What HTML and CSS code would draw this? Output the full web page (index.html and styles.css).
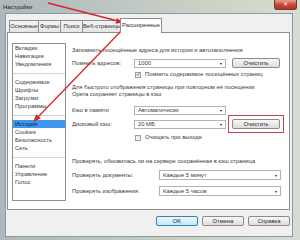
FILE: index.html
```html
<!DOCTYPE html>
<html lang="ru">
<head>
<meta charset="utf-8">
<title>Настройки</title>
<link rel="stylesheet" href="styles.css">
</head>
<body>
<div class="window">
  <div class="titlebar">
    <span class="title">Настройки</span>
    <span class="close">✕</span>
  </div>
  <div class="client">
    <div class="tabs">
      <div class="tab t1">Основные</div>
      <div class="tab t2">Формы</div>
      <div class="tab t3">Поиск</div>
      <div class="tab t4">Веб-страницы</div>
      <div class="tab t5 active">Расширенные</div>
    </div>
    <div class="panel">
      <div class="list">
        <div class="item">Вкладки</div>
        <div class="item">Навигация</div>
        <div class="item">Уведомления</div>
        <div class="sep"></div>
        <div class="item">Содержимое</div>
        <div class="item">Шрифты</div>
        <div class="item">Загрузки</div>
        <div class="item">Программы</div>
        <div class="sep"></div>
        <div class="item selected">История</div>
        <div class="item">Cookies</div>
        <div class="item">Безопасность</div>
        <div class="item">Сеть</div>
        <div class="sep"></div>
        <div class="item">Панели</div>
        <div class="item">Управление</div>
        <div class="item">Голос</div>
      </div>
      <div class="content">
        <div class="text h1">Запомнить посещённые адреса для истории и автозаполнения</div>
        <div class="row r1">
          <span class="label">Помнить адресов:</span>
          <span class="select">1000<i class="arrow"></i></span>
          <span class="btn">Очистить</span>
        </div>
        <div class="check c1"><span class="box checked"><svg viewBox="0 0 6 6" width="6" height="6"><path d="M1 3.2 L2.5 4.6 L5 1.2" fill="none" stroke="#3a3a3a" stroke-width="1"/></svg></span>Помнить содержимое посещённых страниц</div>
        <div class="text h2">Для быстрого отображения страницы при повторном её посещении<br>Opera сохраняет страницы в кэш</div>
        <div class="row r2">
          <span class="label">Кэш в памяти</span>
          <span class="select">Автоматически<i class="arrow"></i></span>
        </div>
        <div class="row r3">
          <span class="label">Дисковый кэш:</span>
          <span class="select">20 МБ<i class="arrow"></i></span>
          <span class="mark"><span class="btn inner">Очистить</span></span>
        </div>
        <div class="check c2"><span class="box"></span>Очищать при выходе</div>
        <div class="text h3">Проверять, обновилась ли на сервере сохранённая в кэш страница</div>
        <div class="row r4">
          <span class="label wide">Проверять документы:</span>
          <span class="select long">Каждые 5 минут<i class="arrow"></i></span>
        </div>
        <div class="row r5">
          <span class="label wide">Проверять изображения:</span>
          <span class="select long">Каждые 5 часов<i class="arrow"></i></span>
        </div>
      </div>
    </div>
    <div class="buttons">
      <span class="btn big default">OK</span>
      <span class="btn big">Отмена</span>
      <span class="btn big">Справка</span>
    </div>
  </div>
  <svg class="arrows" width="300" height="240" viewBox="0 0 300 240">
    <line x1="48" y1="3" x2="118" y2="21" stroke="#d8262a" stroke-width="1.3"/>
    <polygon points="123,22.5 115.5,23.7 116.9,17.9" fill="#d8262a"/>
    <line x1="125" y1="27" x2="37" y2="118" stroke="#d8262a" stroke-width="1.3"/>
    <polygon points="33,122 40.8,118.4 36.4,114.2" fill="#d8262a"/>
  </svg>
</div>
</body>
</html>
```
FILE: styles.css
```css
* { box-sizing: border-box; }
html, body { margin: 0; padding: 0; }
body {
  width: 300px;
  height: 240px;
  overflow: hidden;
  font-family: "Liberation Sans", "DejaVu Sans", Arial, sans-serif;
  font-size: 5.8px;
  color: #3a3a3a;
}
.window {
  position: relative;
  width: 300px;
  height: 240px;
  background: linear-gradient(90deg, #aeb7bb 0%, #bcc5c3 35%, #c9d1c4 65%, #d6ddd2 100%);
  display: flex;
  flex-direction: column;
}
.titlebar {
  height: 13px;
  display: flex;
  align-items: flex-start;
  justify-content: space-between;
  padding-left: 3px;
  padding-right: 3px;
}
.title {
  margin-top: 3px;
  font-size: 6px;
  color: #1c1c1c;
  line-height: 8px;
}
.close {
  width: 23px;
  height: 10px;
  background: linear-gradient(#e8a090, #c8483a 50%, #b8302a);
  border: 1px solid #6e3a38;
  border-top: none;
  border-radius: 0 0 3px 3px;
  color: #fff;
  font-size: 6px;
  line-height: 9px;
  text-align: center;
}
.client {
  margin: 0 7px 0 5px;
  height: 224px;
  background: #f0f0f0;
  border: 1px solid #8f9aa0;
  display: flex;
  flex-direction: column;
}
.tabs {
  display: flex;
  align-items: flex-end;
  height: 14px;
  margin-top: 4px;
  padding-left: 3px;
}
.tab {
  height: 12px;
  line-height: 10px;
  border: 1px solid #8c8e94;
  border-bottom: none;
  margin-right: -1px;
  background: linear-gradient(#f4f4f4, #e4e4e4);
  text-align: center;
  color: #333;
  white-space: nowrap;
}
.t1 { width: 30px; }
.t2 { width: 23px; }
.t3 { width: 23px; }
.t4 { width: 39px; }
.t5 { width: 42px; }
.tab.active {
  height: 15px;
  line-height: 12px;
  background: #fff;
  position: relative;
  z-index: 1;
  margin-bottom: -1px;
}
.panel {
  margin-left: 1px;
  width: 283px;
  height: 178px;
  background: #fff;
  border: 1px solid #8c8e94;
  display: flex;
  padding: 10px 0 0 4px;
}
.list {
  width: 54px;
  height: 158px;
  border: 1px solid #8a8e96;
  display: flex;
  flex-direction: column;
  flex-shrink: 0;
}
.item {
  height: 8px;
  line-height: 8px;
  padding-left: 2px;
  color: #3a3a3a;
  white-space: nowrap;
}
.item.selected {
  background: #3f97ee;
  color: #12264a;
}
.sep {
  height: 10px;
  position: relative;
}
.sep::after {
  content: "";
  position: absolute;
  left: 0; right: 0; top: 5px;
  border-top: 1px solid #d6d6d6;
}
.content {
  margin-left: 6px;
  display: flex;
  flex-direction: column;
  padding-top: 4px;
}
.text {
  line-height: 7px;
  white-space: nowrap;
}
.row {
  display: flex;
  align-items: center;
  height: 10px;
}
.label {
  width: 62px;
  white-space: nowrap;
}
.label.wide { width: 87px; }
.select {
  position: relative;
  width: 92px;
  height: 9px;
  line-height: 7px;
  border: 1px solid #b0b3b8;
  background: #fff;
  padding-left: 3px;
  white-space: nowrap;
}
.select.long { width: 122px; height: 10px; line-height: 8px; }
.arrow {
  position: absolute;
  right: 3px;
  top: 3px;
  width: 0;
  height: 0;
  border-left: 1.5px solid transparent;
  border-right: 1.5px solid transparent;
  border-top: 2px solid #222;
}
.long .arrow { top: 3.5px; }
.btn {
  margin-left: 6px;
  width: 48px;
  height: 10px;
  line-height: 8px;
  text-align: center;
  border: 1px solid #8b8b8b;
  border-radius: 2px;
  background: linear-gradient(#f7f7f7, #ebebeb 50%, #dcdcdc);
  color: #2a2a2a;
}
.mark {
  margin: -4px -3px -4px 2px;
  padding: 3px;
  border: 1px solid #c9404a;
  display: flex;
}
.btn.inner { margin-left: 0; }
.h1 { margin-top: 0; }
.r1 { margin-top: 4px; }
.check {
  display: flex;
  align-items: center;
  height: 7px;
  line-height: 7px;
  margin-left: 62px;
  white-space: nowrap;
}
.c1 { margin-top: 3px; }
.box {
  width: 6px;
  height: 6px;
  border: 1px solid #9a9da3;
  background: linear-gradient(#e6e6e6, #fafafa);
  margin-left: 1px;
  margin-right: 4px;
  display: flex;
  align-items: center;
  justify-content: center;
}
.box svg { display: block; width: 5px; height: 5px; }
.h2 { margin-top: 6px; }
.r2 { margin-top: 7px; }
.r3 { margin-top: 4px; }
.c2 { margin-top: 5px; }
.h3 { margin-top: 17px; }
.r4 { margin-top: 5px; }
.r5 { margin-top: 6px; }
.buttons {
  display: flex;
  justify-content: flex-end;
  margin-top: 6px;
  padding-right: 2px;
}
.btn.big {
  width: 42px;
  margin-left: 4px;
}
.btn.default {
  border-color: #3c7fb1;
  background: linear-gradient(#eaf6fd, #d9f0fc 50%, #bee6fd);
}
.arrows {
  position: absolute;
  left: 0;
  top: 0;
  pointer-events: none;
}
```
